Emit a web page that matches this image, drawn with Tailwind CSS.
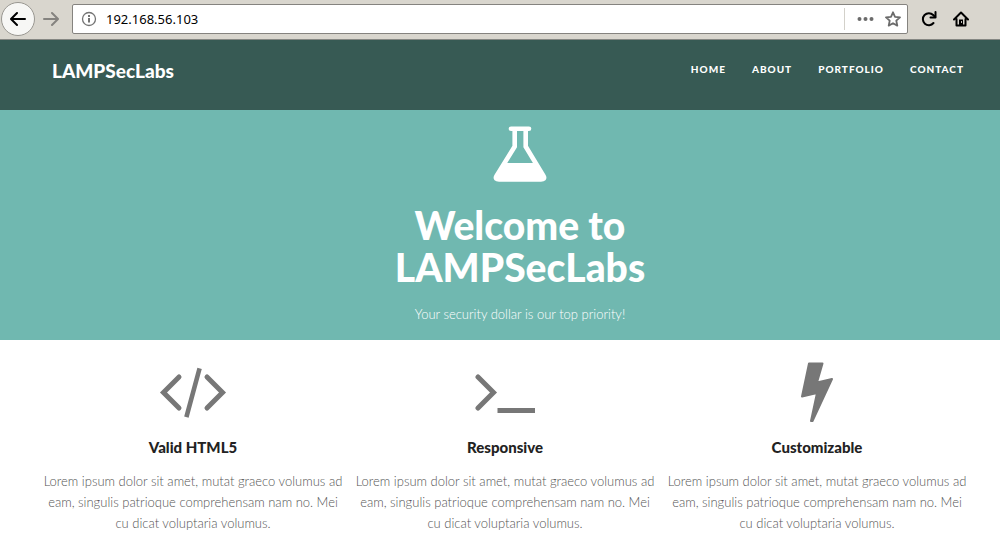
<!DOCTYPE html>
<html lang="en">
<head>
<meta charset="utf-8">
<meta name="viewport" content="width=device-width, initial-scale=1">
<title>LAMPSecLabs</title>
<script src="https://cdn.jsdelivr.net/npm/@tailwindcss/browser@4"></script>
</head>
<body class="bg-white font-['Lato',sans-serif] text-[#777777]">
<div class="flex h-10 items-center border-b border-[#858783] bg-[#d9d6ce] pb-px pl-px pr-[31px]">
  <button type="button" aria-label="Back" class="grid size-[34px] shrink-0 place-items-center rounded-full border border-[#999791] bg-[#f7f7f5] text-black">
    <svg class="size-4" viewBox="0 0 16 16" fill="none" stroke="currentColor" stroke-width="2" stroke-linecap="round" stroke-linejoin="round"><path d="M15 8H1.500M7 2L1 8l6 6"/></svg>
  </button>
  <button type="button" aria-label="Forward" class="ml-2 shrink-0 text-[#85837f]">
    <svg class="size-4" viewBox="0 0 16 16" fill="none" stroke="currentColor" stroke-width="2" stroke-linecap="round" stroke-linejoin="round"><path d="M1 8h13.500M9 2l6 6-6 6"/></svg>
  </button>
  <form class="ml-[13px] flex h-[30px] min-w-0 flex-1 items-center rounded-xs border border-[#85837f] bg-white pl-2 pr-1.5" onsubmit="return false">
    <button type="button" aria-label="Site information" class="text-[#737373]">
      <svg class="size-4" viewBox="0 0 16 16" fill="none" stroke="currentColor"><circle cx="8" cy="8" r="6.500" stroke-width="1.300"/><path d="M8 7v4.500M8 4v2" stroke-width="2"/></svg>
    </button>
    <input type="text" aria-label="Address" value="192.168.56.103" class="ml-[9px] min-w-0 flex-1 bg-transparent font-['Noto_Sans',sans-serif] text-[13px] leading-5 text-black outline-none">
    <span class="h-[22px] w-px bg-[#d3d1ca]"></span>
    <button type="button" aria-label="Page actions" class="ml-3 text-[#6b6b6b]">
      <svg class="h-4 w-[17px]" viewBox="0 0 17 16" fill="currentColor"><circle cx="2.500" cy="8" r="2"/><circle cx="8.500" cy="8" r="2"/><circle cx="14.500" cy="8" r="2"/></svg>
    </button>
    <button type="button" aria-label="Bookmark this page" class="ml-[11px] text-[#6b6b6b]">
      <svg class="size-4" viewBox="0 0 16 16" fill="none" stroke="currentColor" stroke-width="1.800" stroke-linejoin="round"><path d="M8 1.300l2 4.500 5 .6-3.700 3.300 1 4.900L8 12.200l-4.300 2.400 1-4.900L1 6.400l5-.6z"/></svg>
    </button>
  </form>
  <button type="button" aria-label="Reload" class="ml-[13px] shrink-0 text-black">
    <svg class="size-4" viewBox="0 0 16 16" fill="none" stroke="currentColor" stroke-width="2"><path d="M12.500 12A6 6 0 1 1 12.200 4l2 2" stroke-linecap="round"/><path d="M9.500 6.500h5V1" stroke-linecap="round" stroke-linejoin="round"/></svg>
  </button>
  <button type="button" aria-label="Home" class="ml-4 shrink-0 text-black">
    <svg class="size-4" viewBox="0 0 16 16" fill="none" stroke="currentColor" stroke-width="2" stroke-linecap="round" stroke-linejoin="round"><path d="M1 8.500L8 1.500l7 7M3.500 8v6.500h9V8"/><path d="M6 14V8.500h4V14z" fill="currentColor" stroke="none"/><path d="M8.500 10.500v1" stroke="#d9d6ce" stroke-width="1"/></svg>
  </button>
</div>

<header class="flex h-[70px] items-start justify-between bg-[#375a54] px-[52px] pt-4 pr-9 text-white">
  <a href="#home" class="text-[19px] leading-[30px] font-black">LAMPSecLabs</a>
  <nav aria-label="Main" class="flex gap-[26px] text-[10px] leading-[26px] font-black tracking-[1px]">
    <a href="#home">HOME</a>
    <a href="#about">ABOUT</a>
    <a href="#portfolio">PORTFOLIO</a>
    <a href="#contact">CONTACT</a>
  </nav>
</header>

<main>
  <section id="home" class="flex flex-col items-center bg-[#70b8b0] pt-4 pb-4 pl-10 text-center text-white">
    <svg class="h-14 w-[54px]" viewBox="0 0 54 56" fill="none" aria-hidden="true">
      <path d="M18 2.800h18" stroke="currentColor" stroke-width="4.600" stroke-linecap="round"/>
      <path d="M21.700 3v17.500L3.500 50c-1.500 2.500 0 3.400 2.500 3.400h42c2.500 0 4-.9 2.500-3.400L32.700 20.500V3" stroke="currentColor" stroke-width="4.600"/>
      <path d="M13 37h28.500L51 52l-3 2H6l-3-2z" fill="currentColor"/>
    </svg>
    <h1 class="mt-[22px] max-w-[300px] text-[39px] leading-[42px] font-black">Welcome to LAMPSecLabs</h1>
    <p class="mt-4 text-[13px] leading-5 font-light">Your security dollar is our top priority!</p>
  </section>

  <section id="about" class="grid grid-cols-3 gap-2 pt-5 pr-[31px] pl-[41px] text-center">
    <article>
      <svg class="mx-auto h-16 w-[68px]" viewBox="0 0 68 64" fill="none" stroke="currentColor" stroke-width="5" stroke-linecap="round" stroke-linejoin="miter" aria-hidden="true"><path d="M20 17L4.500 32.500 20 48M48 17l15.500 15.500L48 48"/><path d="M40 10.500L28 55" stroke-linecap="square" stroke-width="4.600"/></svg>
      <h2 class="mt-[11px] text-[15px] leading-6 font-black text-[#222222]">Valid HTML5</h2>
      <p class="mt-3 text-[13px] leading-[21px] font-light text-[#555555]">Lorem ipsum dolor sit amet, mutat graeco volumus ad eam, singulis patrioque comprehensam nam no. Mei cu dicat voluptaria volumus.</p>
    </article>
    <article>
      <svg class="mx-auto h-16 w-[60px]" viewBox="0 0 60 64" fill="none" stroke="currentColor" stroke-width="5" stroke-linecap="round" stroke-linejoin="miter" aria-hidden="true"><path d="M3 17l15.500 15.500L3 48"/><path d="M25 50.500h33" stroke-linecap="square"/></svg>
      <h2 class="mt-[11px] text-[15px] leading-6 font-black text-[#222222]">Responsive</h2>
      <p class="mt-3 text-[13px] leading-[21px] font-light text-[#555555]">Lorem ipsum dolor sit amet, mutat graeco volumus ad eam, singulis patrioque comprehensam nam no. Mei cu dicat voluptaria volumus.</p>
    </article>
    <article>
      <svg class="mx-auto h-16 w-[34px]" viewBox="0 0 34 64" fill="currentColor" stroke="currentColor" stroke-width="2" stroke-linejoin="round" aria-hidden="true"><path d="M9 3.500h13.500L17 22.500 32 19 12.500 61h-1.500L17 33 2 36.500z"/></svg>
      <h2 class="mt-[11px] text-[15px] leading-6 font-black text-[#222222]">Customizable</h2>
      <p class="mt-3 text-[13px] leading-[21px] font-light text-[#555555]">Lorem ipsum dolor sit amet, mutat graeco volumus ad eam, singulis patrioque comprehensam nam no. Mei cu dicat voluptaria volumus.</p>
    </article>
  </section>
</main>
</body>
</html>
